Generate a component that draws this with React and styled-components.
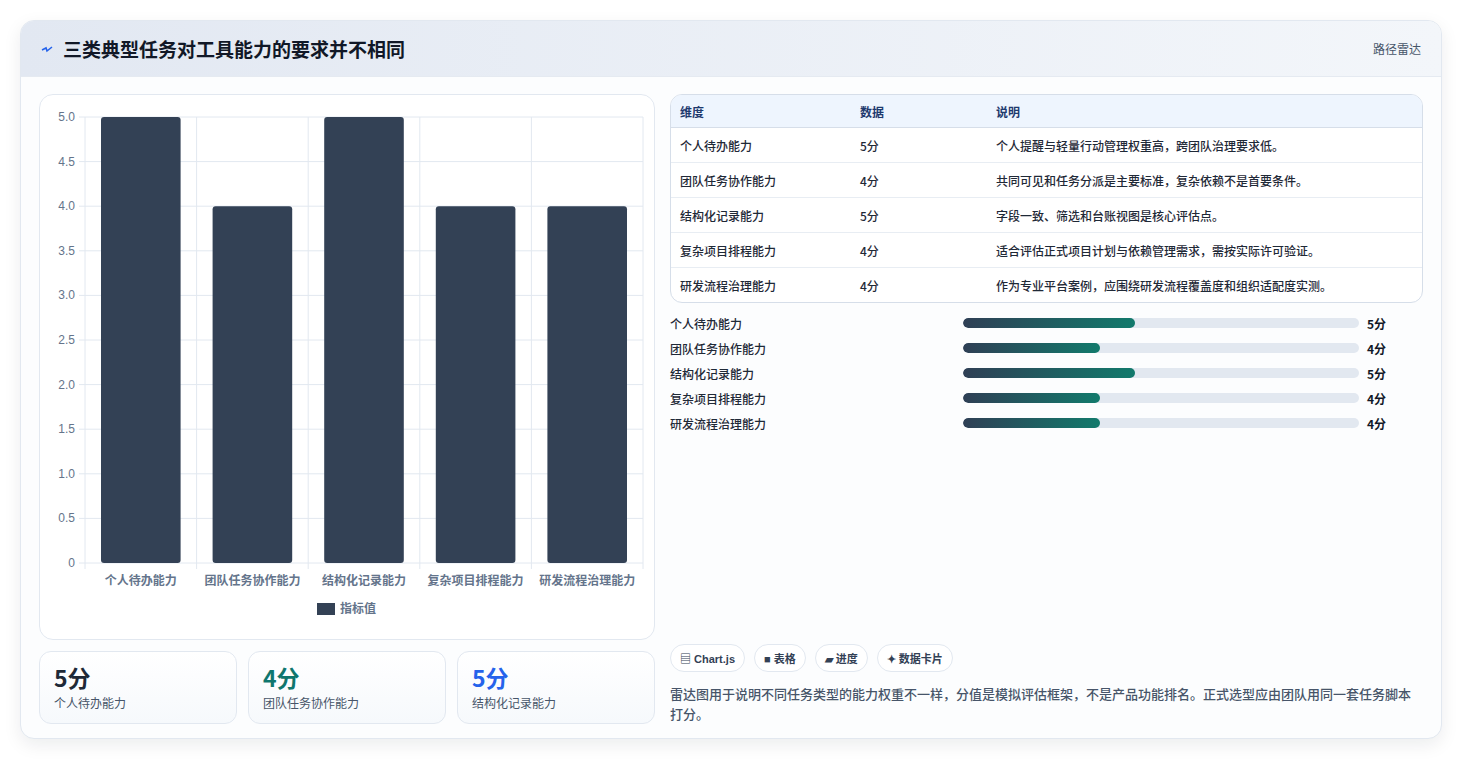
import React from "react";
import styled, { createGlobalStyle } from "styled-components";

const dims = [
  { name: "个人待办能力", v: 5, note: "个人提醒与轻量行动管理权重高，跨团队治理要求低。" },
  { name: "团队任务协作能力", v: 4, note: "共同可见和任务分派是主要标准，复杂依赖不是首要条件。" },
  { name: "结构化记录能力", v: 5, note: "字段一致、筛选和台账视图是核心评估点。" },
  { name: "复杂项目排程能力", v: 4, note: "适合评估正式项目计划与依赖管理需求，需按实际许可验证。" },
  { name: "研发流程治理能力", v: 4, note: "作为专业平台案例，应围绕研发流程覆盖度和组织适配度实测。" },
];

const Global = createGlobalStyle`
  body { margin: 0; background: #fff; font-family: "Noto Sans CJK SC", "Noto Sans", sans-serif; color: #1f2937; }
`;

const Page = styled.div`
  padding: 20px 20px 21px 20px;
`;

const Card = styled.div`
  border: 1px solid #e2e8f0;
  border-radius: 14px;
  background: #fcfdfe;
  box-shadow: 0 6px 18px rgba(15, 23, 42, 0.08);
  overflow: hidden;
  height: 719px;
  box-sizing: border-box;
`;

const Header = styled.div`
  height: 55px;
  display: flex;
  align-items: center;
  justify-content: space-between;
  padding: 0 20px;
  background: linear-gradient(90deg, #e2e8f2, #f3f6fa);
  border-bottom: 1px solid #e5eaf1;
`;

const Title = styled.h2`
  margin: 0;
  font-size: 19px;
  font-weight: 700;
  color: #111827;
  display: flex;
  align-items: center;
  gap: 10px;
`;

const Tag = styled.span`
  font-size: 12px;
  color: #475569;
`;

const Body = styled.div`
  display: grid;
  grid-template-columns: 616px 1fr;
  gap: 15px;
  padding: 17px 18px 18px 18px;
  height: 644px;
  box-sizing: border-box;
`;

const Left = styled.div`
  display: flex;
  flex-direction: column;
  gap: 11px;
`;

const ChartBox = styled.div`
  background: #fff;
  border: 1px solid #e2e8f0;
  border-radius: 14px;
  height: 544px;
`;

const Stats = styled.div`
  display: grid;
  grid-template-columns: repeat(3, 1fr);
  gap: 11px;
`;

const Stat = styled.div`
  border: 1px solid #e2e8f0;
  border-radius: 12px;
  background: linear-gradient(180deg, #fff, #f6f9fc);
  padding: 10px 14px;
  height: 73px;
  box-sizing: border-box;
`;

const StatNum = styled.div`
  font-size: 23px;
  font-weight: 700;
  color: ${(p) => p.$c};
  line-height: 30px;
`;

const StatLabel = styled.div`
  font-size: 12px;
  color: #475569;
  margin-top: 2px;
`;

const Right = styled.div`
  display: flex;
  flex-direction: column;
`;

const Table = styled.table`
  width: 100%;
  border-collapse: separate;
  border-spacing: 0;
  border: 1px solid #d6dee9;
  border-radius: 12px;
  overflow: hidden;
  font-size: 12px;
  background: #fff;
  th {
    background: #eef5fe;
    color: #1e3a6e;
    font-weight: 700;
    text-align: left;
    height: 32px;
    padding: 0 9px;
    border-bottom: 1px solid #d6dee9;
  }
  td {
    height: 34px;
    padding: 0 9px;
    color: #1f2937;
    font-weight: 500;
    border-top: 1px solid #e8edf3;
  }
  tr:nth-child(1) td { border-top: none; }
  th:nth-child(1) { width: 162px; }
  th:nth-child(2) { width: 118px; }
`;

const Bars = styled.div`
  display: flex;
  flex-direction: column;
  gap: 7px;
  margin-top: 11px;
`;

const BarRow = styled.div`
  display: grid;
  grid-template-columns: 285px 396px 1fr;
  align-items: center;
  gap: 8px;
  font-size: 12px;
  font-weight: 500;
  height: 18px;
`;

const Track = styled.div`
  height: 10px;
  border-radius: 5px;
  background: #e2e8f0;
  overflow: hidden;
`;

const Fill = styled.div`
  height: 100%;
  border-radius: 5px;
  background: linear-gradient(90deg, #2f3f55, #127a6c);
`;

const Val = styled.span`
  font-weight: 700;
  color: #111827;
`;

const Chips = styled.div`
  margin-top: auto;
  display: flex;
  gap: 9px;
`;

const Chip = styled.span`
  border: 1px solid #e2e8f0;
  border-radius: 15px;
  background: #fff;
  padding: 5px 9px;
  font-size: 11px;
  font-weight: 700;
  color: #334155;
  font-family: "Liberation Sans", "Noto Sans CJK SC", sans-serif;
`;

const Note = styled.p`
  margin: 12px 0 0;
  font-size: 13px;
  line-height: 20px;
  color: #475569;
  font-weight: 500;
`;

function BarChart() {
  const x0 = 45, x1 = 603, yTop = 22, yBot = 468;
  const w = (x1 - x0) / 5;
  const ticks = [0, 0.5, 1, 1.5, 2, 2.5, 3, 3.5, 4, 4.5, 5];
  const y = (v) => yBot - (v / 5) * (yBot - yTop);
  return (
    <svg width="616" height="544" style={{ display: "block", fontFamily: "Liberation Sans, Noto Sans CJK SC, sans-serif" }}>
      {ticks.map((t) => (
        <g key={t}>
          <line x1={x0 - 6} x2={x1} y1={y(t)} y2={y(t)} stroke="#e2e8f0" />
          <text x={x0 - 10} y={y(t) + 4} textAnchor="end" fontSize="12" fill="#64748b">
            {t === 0 ? "0" : t.toFixed(1)}
          </text>
        </g>
      ))}
      {[0, 1, 2, 3, 4, 5].map((i) => (
        <line key={i} x1={x0 + i * w} x2={x0 + i * w} y1={yTop} y2={yBot + 6} stroke="#e2e8f0" />
      ))}
      {dims.map((d, i) => (
        <g key={d.name}>
          <rect x={x0 + i * w + 16} y={y(d.v)} width={w - 32} height={yBot - y(d.v)} rx="3" fill="#334155" />
          <text x={x0 + i * w + w / 2} y={yBot + 22} textAnchor="middle" fontSize="12" fontWeight="600" fill="#64748b">
            {d.name}
          </text>
        </g>
      ))}
      <rect x="277" y="508" width="18" height="12" fill="#334155" />
      <text x="300" y="518" fontSize="12" fontWeight="600" fill="#64748b">指标值</text>
    </svg>
  );
}

export default function App() {
  return (
    <Page>
      <Global />
      <Card>
        <Header>
          <Title>
            <svg width="12" height="10" viewBox="0 0 12 10">
              <path d="M1 6 L5 4 L6 7 L11 3" stroke="#2563eb" strokeWidth="1.6" fill="none" />
            </svg>
            三类典型任务对工具能力的要求并不相同
          </Title>
          <Tag>路径雷达</Tag>
        </Header>
        <Body>
          <Left>
            <ChartBox>
              <BarChart />
            </ChartBox>
            <Stats>
              <Stat><StatNum $c="#1f2937">5分</StatNum><StatLabel>个人待办能力</StatLabel></Stat>
              <Stat><StatNum $c="#0f766e">4分</StatNum><StatLabel>团队任务协作能力</StatLabel></Stat>
              <Stat><StatNum $c="#2563eb">5分</StatNum><StatLabel>结构化记录能力</StatLabel></Stat>
            </Stats>
          </Left>
          <Right>
            <Table>
              <thead>
                <tr><th>维度</th><th>数据</th><th>说明</th></tr>
              </thead>
              <tbody>
                {dims.map((d) => (
                  <tr key={d.name}><td>{d.name}</td><td>{d.v}分</td><td>{d.note}</td></tr>
                ))}
              </tbody>
            </Table>
            <Bars>
              {dims.map((d) => (
                <BarRow key={d.name}>
                  <span>{d.name}</span>
                  <Track><Fill style={{ width: `${d.v * 8.68}%` }} /></Track>
                  <Val>{d.v}分</Val>
                </BarRow>
              ))}
            </Bars>
            <Chips>
              <Chip>▤ Chart.js</Chip>
              <Chip>■ 表格</Chip>
              <Chip>▰ 进度</Chip>
              <Chip>✦ 数据卡片</Chip>
            </Chips>
            <Note>雷达图用于说明不同任务类型的能力权重不一样，分值是模拟评估框架，不是产品功能排名。正式选型应由团队用同一套任务脚本打分。</Note>
          </Right>
        </Body>
      </Card>
    </Page>
  );
}
